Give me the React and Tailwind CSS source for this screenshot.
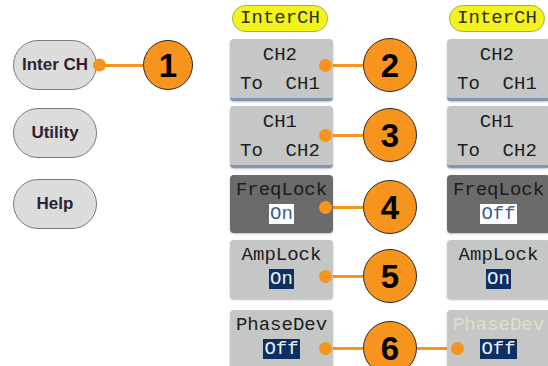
import React from 'react';

const mono = { fontFamily: '"Liberation Mono", "Courier New", monospace' };
const sans = { fontFamily: '"Liberation Sans", Arial, sans-serif' };

// rows of the soft-key menu: top margin, box height, dot y inside box
const rows = [
  { mt: 7, h: 62, dot: 26, num: 2, kind: 'route', a: ['  CH2', 'To  CH1'], b: ['  CH2', 'To  CH1'] },
  { mt: 5, h: 62, dot: 29, num: 3, kind: 'route', a: ['  CH1', 'To  CH2'], b: ['  CH1', 'To  CH2'] },
  { mt: 7, h: 58, dot: 32, num: 4, kind: 'toggle', dark: true, label: 'FreqLock', a: 'On', b: 'Off', hi: 'white' },
  { mt: 6, h: 59, dot: 36, num: 5, kind: 'toggle', label: 'AmpLock', a: 'On', b: 'On', hi: 'navy' },
  { mt: 7, h: 60, dot: 38, num: 6, kind: 'toggle', label: 'PhaseDev', a: 'Off', b: 'Off', hi: 'navy', fadeB: true, link: true },
];

const DotAt = ({ y, right }) => (
  <span
    className={`absolute w-[13px] h-[13px] rounded-full bg-[#f7941d] ${right ? 'right-[1px]' : 'left-[4px]'}`}
    style={{ top: y - 6 }}
  />
);

const Badge = ({ n, size = 54 }) => (
  <div
    className="shrink-0 rounded-full bg-[#f7941d] border border-[#2a2a2a] flex items-center justify-center text-[33px] font-bold text-black leading-none"
    style={{ ...sans, width: size, height: size }}
  >
    {n}
  </div>
);

const Pill = () => (
  <div className="ml-[2px] w-[96px] h-[27px] rounded-full bg-[#f4f31c] border border-[#a9a95a] flex items-center justify-center text-[19px] text-[#2e2e1a]" style={mono}>
    InterCH
  </div>
);

const MenuBox = ({ row, side }) => {
  const fade = side === 'b' && row.fadeB;
  if (row.kind === 'route') {
    const [top, bottom] = row[side];
    return (
      <div className="relative w-[103px] rounded-[4px] bg-[#c4c7c6] border-b-[3px] border-[#8396ae] shadow-[0_1px_2px_rgba(0,0,0,0.25)] pt-[2px] text-[19px] text-[#1c1c1c] leading-[29px] whitespace-pre" style={{ ...mono, height: row.h }}>
        <div className="pl-[10px]">{top}</div>
        <div className="pl-[10px]">{bottom}</div>
        {side === 'a' && <DotAt y={row.dot} right />}
      </div>
    );
  }
  const val = row[side];
  const hiCls = row.hi === 'white' ? 'bg-white text-[#3b5f8e]' : 'bg-[#0d2f63] text-[#eef3ff]';
  return (
    <div
      className={`relative w-[103px] rounded-[4px] shadow-[0_1px_2px_rgba(0,0,0,0.25)] pt-[3px] flex flex-col items-center text-[19px] ${row.dark ? 'bg-[#6b6b6b]' : 'bg-[#c4c7c6]'}`}
      style={{ ...mono, height: row.h }}
    >
      <div className={`leading-[24px] ${fade ? 'text-[#e2ddcc]' : 'text-[#1c1c1c]'}`}>{row.label}</div>
      <div className={`mt-[2px] leading-[20px] px-[1px] ${hiCls}`}>{val}</div>
      {side === 'a' && <DotAt y={row.dot} right />}
      {side === 'b' && row.link && <DotAt y={row.dot} />}
    </div>
  );
};

const SideButton = ({ label, children, className = '' }) => (
  <div className={`flex items-center ${className}`}>
    <div className="relative w-[84px] h-[50px] rounded-full bg-[#dcdcdc] border-[1.5px] border-[#7b7b7b] flex items-center justify-center text-[17px] font-bold text-[#2c2232]" style={sans}>
      {label}
      {children}
    </div>
  </div>
);

export default function App() {
  return (
    <div className="w-[548px] h-[366px] overflow-hidden bg-white flex">
      {/* hard keys */}
      <div className="w-[230px] shrink-0 pl-[13px] flex flex-col">
        <div className="mt-[40px] flex items-center">
          <SideButton label="Inter CH">
            <span className="absolute -right-[10px] top-1/2 -translate-y-1/2 w-[13px] h-[13px] rounded-full bg-[#f7941d] z-10" />
          </SideButton>
          <div className="w-[46px] h-[3px] bg-[#f7941d]" />
          <Badge n={1} size={50} />
        </div>
        <SideButton label="Utility" className="mt-[18px]" />
        <SideButton label="Help" className="mt-[21px]" />
      </div>

      {/* soft-key menus */}
      <div className="w-[320px] shrink-0 flex flex-col">
        <div className="mt-[5px] flex">
          <div className="w-[103px]"><Pill /></div>
          <div className="w-[114px]" />
          <div className="w-[103px]"><Pill /></div>
        </div>
        {rows.map(row => (
          <div key={row.num} className="flex items-start" style={{ marginTop: row.mt }}>
            <MenuBox row={row} side="a" />
            <div className="w-[114px] flex items-center" style={{ marginTop: row.dot - 27 }}>
              <div className="w-[38px] -ml-[8px] h-[3px] bg-[#f7941d]" />
              <Badge n={row.num} />
              {row.link && <div className="w-[36px] -mr-[6px] h-[3px] bg-[#f7941d]" />}
            </div>
            <MenuBox row={row} side="b" />
          </div>
        ))}
      </div>
    </div>
  );
}
